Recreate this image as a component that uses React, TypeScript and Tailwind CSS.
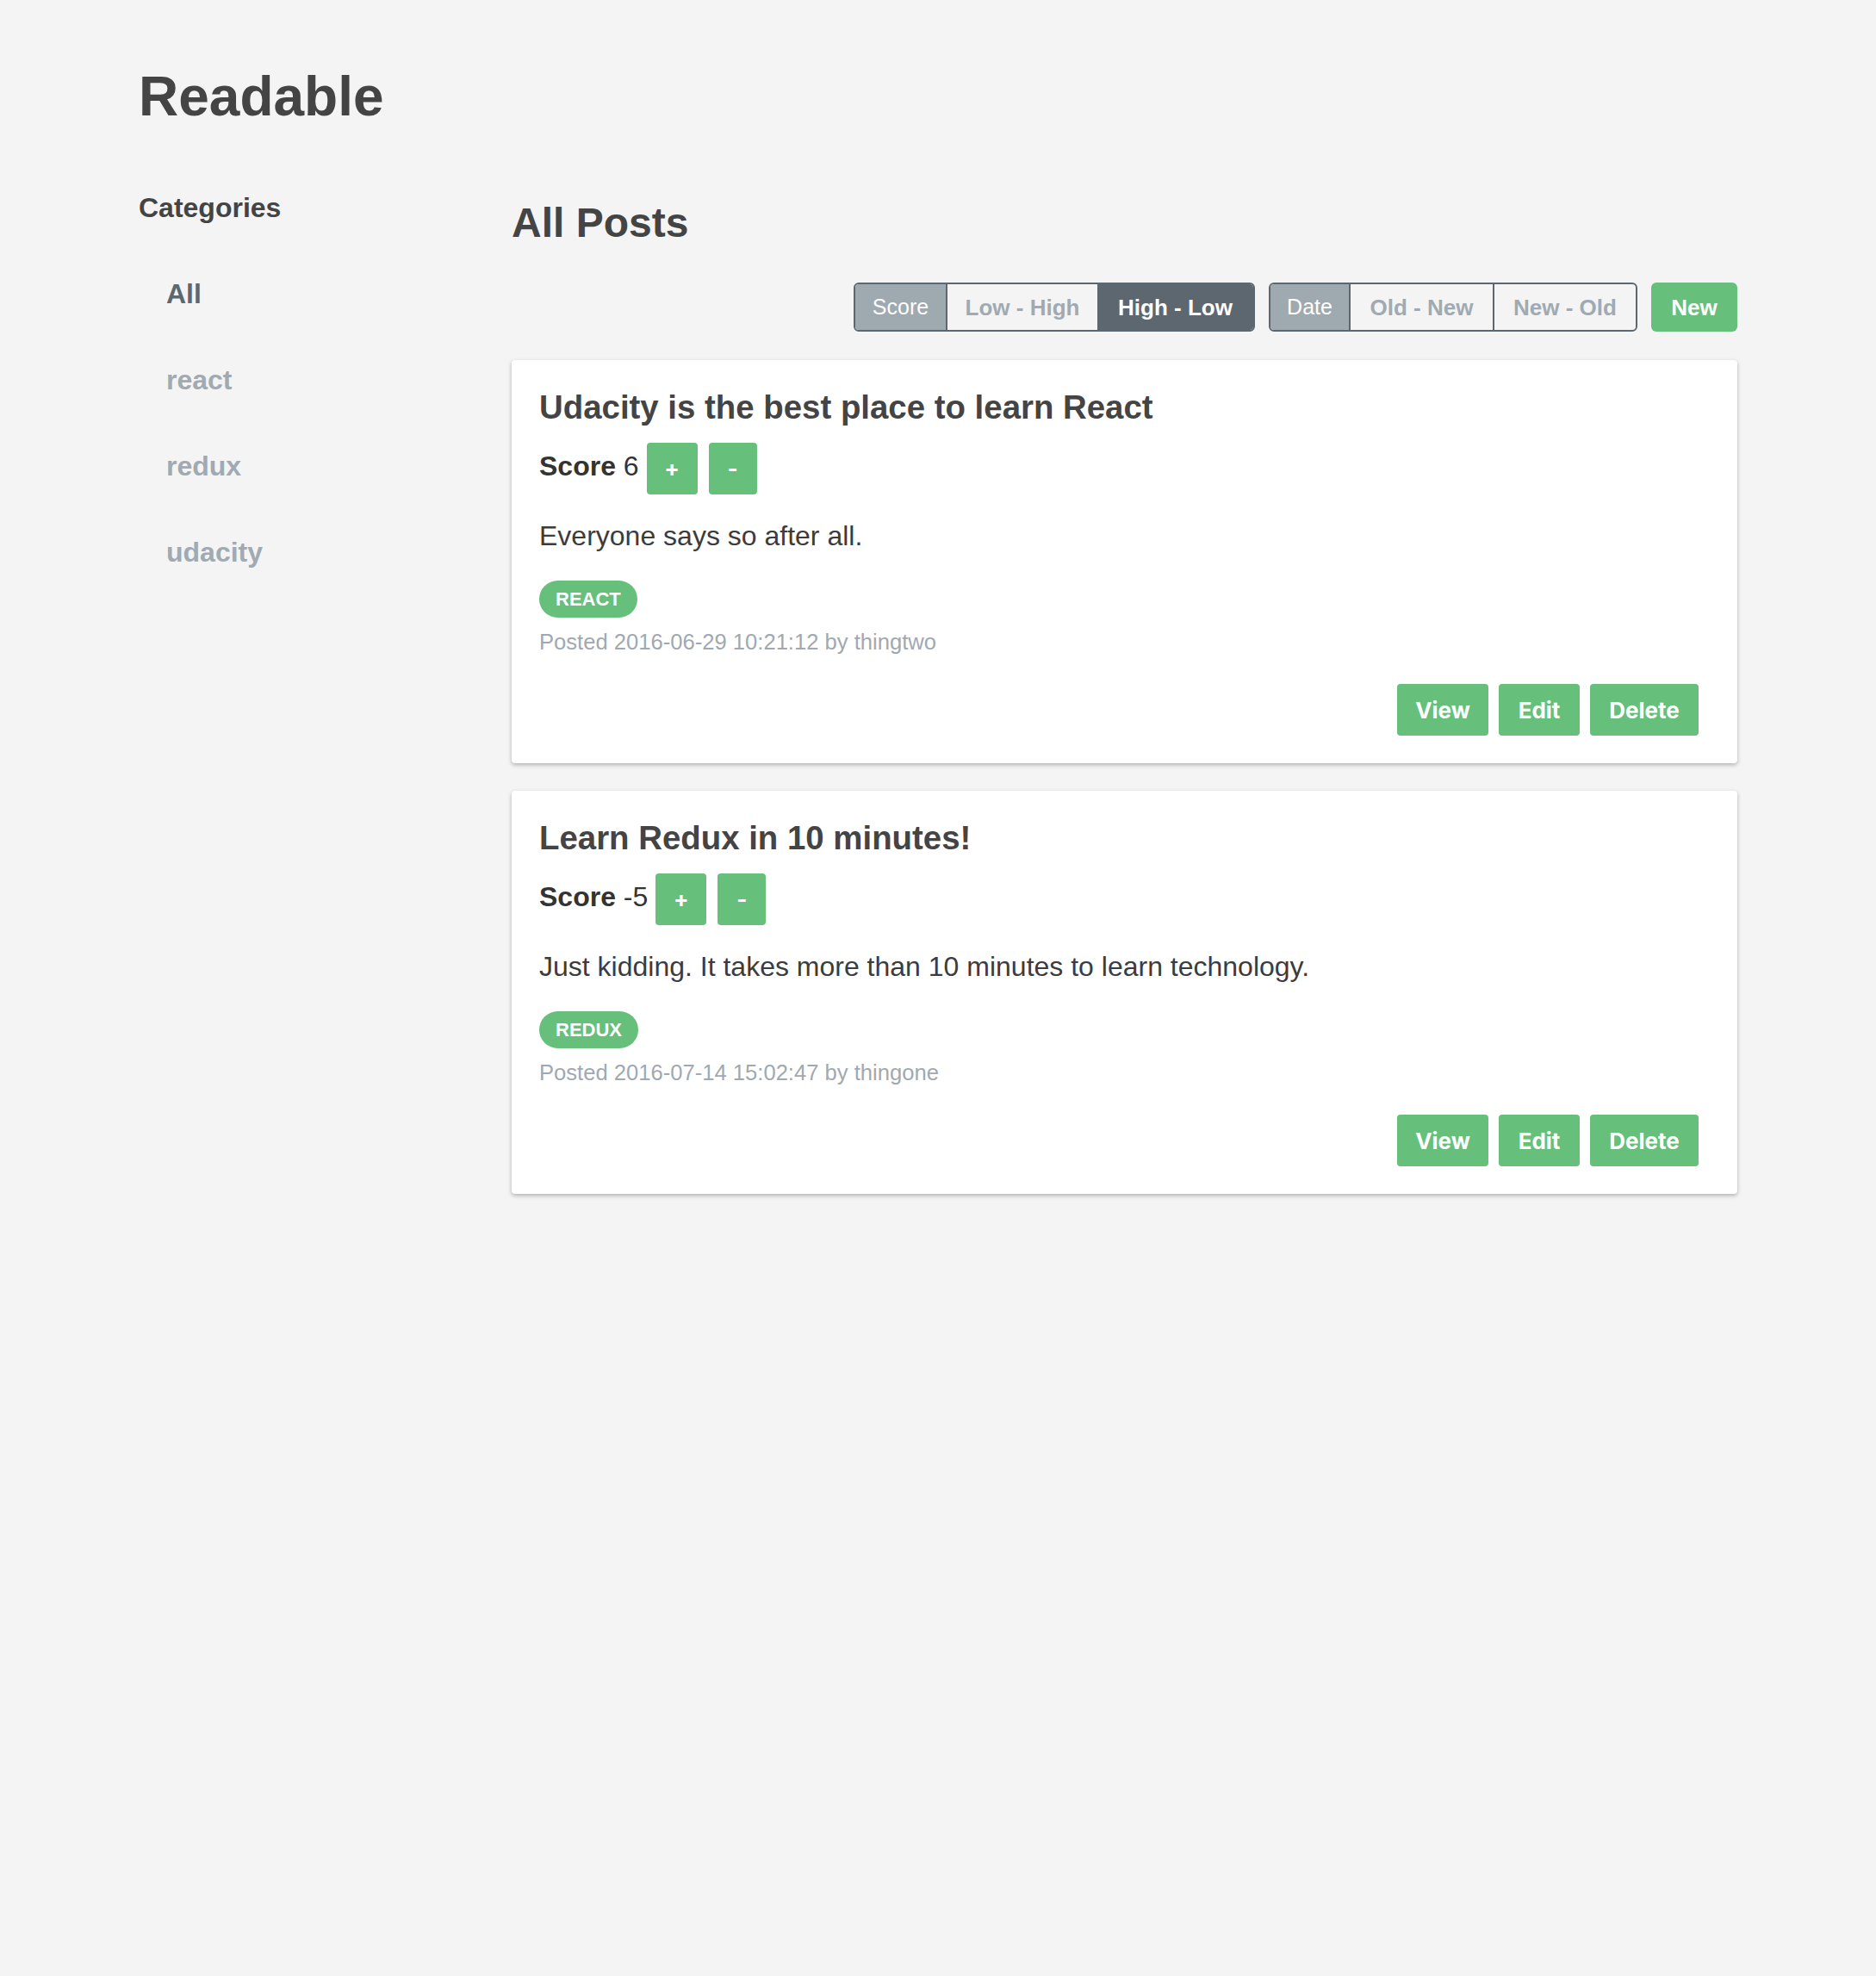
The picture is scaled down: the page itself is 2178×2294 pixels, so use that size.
const categories = [
  { name: 'All', active: true },
  { name: 'react', active: false },
  { name: 'redux', active: false },
  { name: 'udacity', active: false },
];

const posts = [
  {
    id: 1,
    title: 'Udacity is the best place to learn React',
    score: 6,
    body: 'Everyone says so after all.',
    category: 'react',
    date: '2016-06-29 10:21:12',
    author: 'thingtwo',
  },
  {
    id: 2,
    title: 'Learn Redux in 10 minutes!',
    score: -5,
    body: 'Just kidding. It takes more than 10 minutes to learn technology.',
    category: 'redux',
    date: '2016-07-14 15:02:47',
    author: 'thingone',
  },
];

const PostCard = ({ post }: { post: (typeof posts)[number] }) => {
  return (
    <div className="bg-white rounded-[4px] shadow-[0_2px_5px_rgba(0,0,0,0.28)] pl-[32px] pr-[45px] pt-[36px] pb-[32px]">
      <h3 className="text-[38.4px] leading-none font-bold text-[#444]">{post.title}</h3>

      {/* score + vote buttons */}
      <div className="mt-[22px] flex items-start">
        <p className="mt-[11px] text-[32px] leading-none text-[#333]">
          <span className="font-bold">Score</span> {post.score}
        </p>
        <button className="ml-[9px] w-[59px] h-[60px] rounded-[4px] bg-[#66bf7a] text-white font-['Inter',sans-serif] font-bold text-[26px] leading-none">
          +
        </button>
        <button className="ml-[13px] w-[56px] h-[60px] rounded-[4px] bg-[#66bf7a] text-white font-['Inter',sans-serif] font-bold text-[26px] leading-none">
          -
        </button>
      </div>

      <p className="mt-[32px] text-[32px] leading-none text-[#3c3c3c]">{post.body}</p>

      <div className="mt-[36px] flex">
        <span className="h-[43px] px-[19px] rounded-full bg-[#66bf7a] text-white font-bold text-[22px] leading-none uppercase flex items-center">
          {post.category}
        </span>
      </div>

      <p className="mt-[16px] text-[25.6px] leading-none text-[#a0a9b1]">
        Posted {post.date} by {post.author}
      </p>

      <div className="mt-[35px] flex justify-end gap-[12px] font-['Inter',sans-serif] font-bold text-[26px] text-white">
        <button className="w-[106px] h-[60px] rounded-[4px] bg-[#66bf7a]">View</button>
        <button className="w-[94px] h-[60px] rounded-[4px] bg-[#66bf7a]">Edit</button>
        <button className="w-[126px] h-[60px] rounded-[4px] bg-[#66bf7a]">Delete</button>
      </div>
    </div>
  );
};

const App = () => {
  return (
    <div className="min-h-screen bg-[#f4f4f4] font-['Liberation_Sans',Arial,sans-serif] px-[161px] pt-[80px] pb-[80px]">
      <h1 className="text-[64px] leading-none font-bold text-[#444]">Readable</h1>

      <div className="mt-[81px] grid grid-cols-[433px_1fr]">
        {/* sidebar */}
        <aside>
          <h4 className="text-[32px] leading-none font-bold text-[#444]">Categories</h4>
          <ul className="mt-[68px] pl-[32px] flex flex-col gap-[68px]">
            {categories.map((c) => (
              <li
                key={c.name}
                className={
                  c.active
                    ? 'text-[32px] leading-none font-bold text-[#5c6770]'
                    : 'text-[32px] leading-none font-bold text-[#a0aab2]'
                }
              >
                {c.name}
              </li>
            ))}
          </ul>
        </aside>

        {/* main */}
        <main className="pt-[10px]">
          <h2 className="text-[48px] leading-none font-bold text-[#444]">All Posts</h2>

          <div className="mt-[45px] flex justify-end gap-[16px] text-[26px] leading-none">
            <div className="flex h-[57px] border-2 border-[#5c6770] rounded-[6px] overflow-hidden">
              <span className="w-[105px] bg-[#9ea9b0] text-white text-[25px] flex items-center justify-center">Score</span>
              <button className="w-[176px] border-l-2 border-[#5c6770] text-[#a0aab2] font-bold flex items-center justify-center">
                Low - High
              </button>
              <button className="w-[181px] bg-[#5c6770] text-white font-bold flex items-center justify-center">
                High - Low
              </button>
            </div>
            <div className="flex h-[57px] border-2 border-[#5c6770] rounded-[6px] overflow-hidden">
              <span className="w-[91px] bg-[#9ea9b0] text-white text-[25px] flex items-center justify-center">Date</span>
              <button className="w-[167px] border-l-2 border-[#5c6770] text-[#a0aab2] font-bold flex items-center justify-center">
                Old - New
              </button>
              <button className="w-[166px] border-l-2 border-[#5c6770] text-[#a0aab2] font-bold flex items-center justify-center">
                New - Old
              </button>
            </div>
            <button className="w-[100px] h-[57px] rounded-[6px] bg-[#66bf7a] text-white font-bold">New</button>
          </div>

          <div className="mt-[33px] flex flex-col gap-[32px]">
            {posts.map((p) => (
              <PostCard key={p.id} post={p} />
            ))}
          </div>
        </main>
      </div>
    </div>
  );
};

export default App;
